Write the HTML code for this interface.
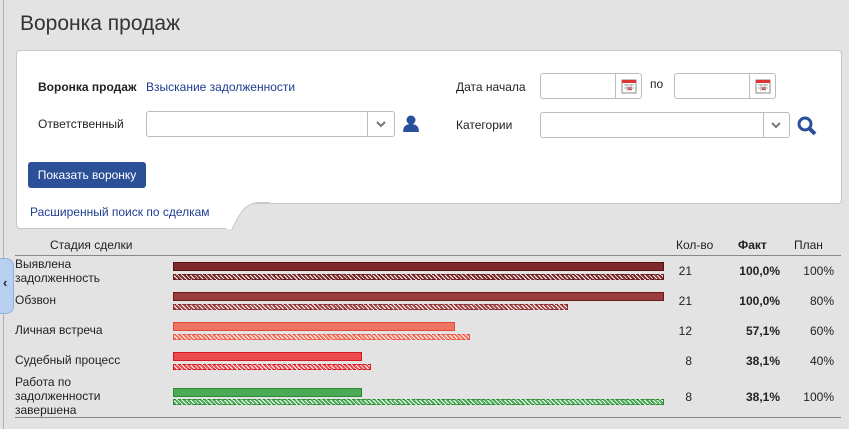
<!DOCTYPE html><html><head><meta charset="utf-8"><style>
body{margin:0;width:849px;height:429px;background:#e3e3e3;font-family:"Liberation Sans",sans-serif;font-size:12px;color:#222;position:relative;overflow:hidden}
.a{position:absolute}
h1{position:absolute;left:20px;top:12px;margin:0;font-weight:normal;font-size:21px;color:#333}
.panel{position:absolute;left:16px;top:50px;width:824px;height:152px;background:#fff;border:1px solid #c5c8cc;border-radius:4px}
.tab{position:absolute;left:16px;top:198px;width:216px;height:30px;background:#fff;border:1px solid #c5c8cc;border-top:none;border-right:none;border-radius:0 0 0 4px}
.inp{position:absolute;height:26px;border:1px solid #b9bec4;border-radius:3px;background:#fff;box-sizing:border-box}
.inp .btn{position:absolute;right:0;top:0;bottom:0;border-left:1px solid #b9bec4}
a{color:#1e3d8f;text-decoration:none}
.bar{position:absolute;height:9px;box-sizing:border-box}
.hat{position:absolute;height:6px;box-sizing:border-box;border:1px dashed}
.num{position:absolute;text-align:right}
</style></head><body>
<div class="a" style="left:3px;top:0;width:1px;height:429px;background:#b0b0b0"></div>
<h1>Воронка продаж</h1>
<div class="panel"></div>
<div class="tab"></div>
<svg class="a" style="left:226px;top:199px" width="44" height="31"><path d="M0 30 L6 30 C12 20 16 3.5 34 3.5 L44 3.5 L44 0 L0 0Z" fill="#fff"/><path d="M6 29.5 C12 20 16 3.5 34 3.5 L44 3.5" fill="none" stroke="#c5c8cc"/></svg>
<div class="a" style="left:38px;top:80px;font-weight:bold">Воронка продаж</div>
<a class="a" style="left:146px;top:80px">Взыскание задолженности</a>
<div class="a" style="left:38px;top:117px">Ответственный</div>
<div class="inp" style="left:146px;top:111px;width:249px"><div class="btn" style="width:26px"><svg width="26" height="24"><path d="M9 10l4 4 4-4" stroke="#777" stroke-width="2" fill="none"/></svg></div></div>
<svg class="a" style="left:403px;top:115px" width="16" height="17"><circle cx="8" cy="5" r="4.5" fill="#2a4f9b"/><path d="M0 17 Q0 9 8 9 Q16 9 16 17Z" fill="#2a4f9b"/></svg>
<div class="a" style="left:456px;top:80px">Дата начала</div>
<div class="inp" style="left:540px;top:73px;width:102px"><div class="btn" style="width:25px"><svg width="25" height="24"><rect x="6" y="6" width="14" height="13" fill="#fff" stroke="#888"/><rect x="6" y="6" width="14" height="3" fill="#d33"/><rect x="12" y="13" width="4" height="3" fill="#d33"/><path d="M8 11h10M8 14h10M11 10v7M15 10v7" stroke="#aaa"/></svg></div></div>
<div class="a" style="left:650px;top:77px">по</div>
<div class="inp" style="left:674px;top:73px;width:102px"><div class="btn" style="width:25px"><svg width="25" height="24"><rect x="6" y="6" width="14" height="13" fill="#fff" stroke="#888"/><rect x="6" y="6" width="14" height="3" fill="#d33"/><rect x="12" y="13" width="4" height="3" fill="#d33"/><path d="M8 11h10M8 14h10M11 10v7M15 10v7" stroke="#aaa"/></svg></div></div>
<div class="a" style="left:456px;top:118px">Категории</div>
<div class="inp" style="left:540px;top:112px;width:250px"><div class="btn" style="width:25px"><svg width="25" height="24"><path d="M8 10l4 4 4-4" stroke="#777" stroke-width="2" fill="none"/></svg></div></div>
<svg class="a" style="left:797px;top:116px" width="20" height="20"><circle cx="8" cy="8" r="6" stroke="#2a4f9b" stroke-width="3" fill="none"/><path d="M12 12l6 6" stroke="#2a4f9b" stroke-width="4"/></svg>
<div class="a" style="left:28px;top:162px;width:118px;height:26px;background:#2c5097;border-radius:3px;color:#fff;line-height:26px;text-align:center">Показать воронку</div>
<a class="a" style="left:30px;top:205px">Расширенный поиск по сделкам</a>
<div class="a" style="left:0;top:258px;width:14px;height:56px;background:#b8d0f0;border:1px solid #8fb0de;border-left:none;border-radius:0 8px 8px 0;box-sizing:border-box"></div>
<div class="a" style="left:3px;top:275px;font-weight:bold;font-size:13px;color:#223">‹</div>
<div class="a" style="left:50px;top:238px">Стадия сделки</div>
<div class="a" style="left:676px;top:238px">Кол-во</div>
<div class="a" style="left:738px;top:238px;font-weight:bold">Факт</div>
<div class="a" style="left:794px;top:238px">План</div>
<div class="a" style="left:15px;top:255px;width:826px;height:1px;background:#888"></div>
<div class="a" style="left:15px;top:417px;width:826px;height:1px;background:#888"></div>
<div class="a" style="left:15px;top:257px;line-height:14px">Выявлена<br>задолженность</div>
<div class="a" style="left:15px;top:293px">Обзвон</div>
<div class="a" style="left:15px;top:323px">Личная встреча</div>
<div class="a" style="left:15px;top:353px">Судебный процесс</div>
<div class="a" style="left:15px;top:375px;line-height:14px">Работа по<br>задолженности<br>завершена</div>
<div class="bar" style="left:173px;top:262px;width:491px;background:#7d2a2c;border:1px solid #5a1010"></div>
<div class="hat" style="left:173px;top:274px;width:491px;border-color:#6a1a1a;background:repeating-linear-gradient(45deg,#7d2a2c 0 2px,#fff 2px 3px)"></div>
<div class="bar" style="left:173px;top:292px;width:491px;background:#9b3c3e;border:1px solid #6a1a1a"></div>
<div class="hat" style="left:173px;top:304px;width:395px;border-color:#8a2a2a;background:repeating-linear-gradient(45deg,#a04446 0 2px,#fff 2px 3px)"></div>
<div class="bar" style="left:173px;top:322px;width:282px;background:#f07462;border:1px solid #e04a3a"></div>
<div class="hat" style="left:173px;top:334px;width:297px;border-color:#e85a48;background:repeating-linear-gradient(45deg,#f07462 0 2px,#fff 2px 3px)"></div>
<div class="bar" style="left:173px;top:352px;width:189px;background:#ec4a4e;border:1px solid #d01a20"></div>
<div class="hat" style="left:173px;top:364px;width:198px;border-color:#d01a20;background:repeating-linear-gradient(45deg,#ec4a4e 0 2px,#fff 2px 3px)"></div>
<div class="bar" style="left:173px;top:388px;width:189px;background:#4aaa55;border:1px solid #2a8a35"></div>
<div class="hat" style="left:173px;top:399px;width:491px;border-color:#2a8a35;background:repeating-linear-gradient(45deg,#4aaa55 0 2px,#fff 2px 3px)"></div>
<div class="num" style="left:660px;top:264px;width:32px">21</div><div class="num" style="left:720px;top:264px;width:60px;font-weight:bold">100,0%</div><div class="num" style="left:780px;top:264px;width:54px">100%</div>
<div class="num" style="left:660px;top:294px;width:32px">21</div><div class="num" style="left:720px;top:294px;width:60px;font-weight:bold">100,0%</div><div class="num" style="left:780px;top:294px;width:54px">80%</div>
<div class="num" style="left:660px;top:324px;width:32px">12</div><div class="num" style="left:720px;top:324px;width:60px;font-weight:bold">57,1%</div><div class="num" style="left:780px;top:324px;width:54px">60%</div>
<div class="num" style="left:660px;top:354px;width:32px">8</div><div class="num" style="left:720px;top:354px;width:60px;font-weight:bold">38,1%</div><div class="num" style="left:780px;top:354px;width:54px">40%</div>
<div class="num" style="left:660px;top:390px;width:32px">8</div><div class="num" style="left:720px;top:390px;width:60px;font-weight:bold">38,1%</div><div class="num" style="left:780px;top:390px;width:54px">100%</div>
</body></html>
